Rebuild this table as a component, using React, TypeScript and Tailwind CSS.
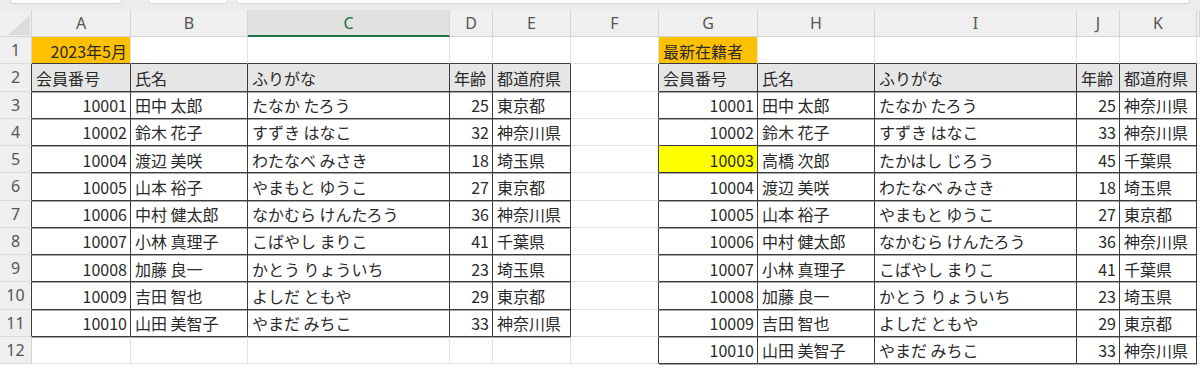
import React from 'react';

type Cell = { text?: string; align?: 'left' | 'right'; bg?: string };

const LETTERS = ['A', 'B', 'C', 'D', 'E', 'F', 'G', 'H', 'I', 'J', 'K', ''];

const oldList: [string, string, string, string, string][] = [
  ['10001', '田中 太郎', 'たなか たろう', '25', '東京都'],
  ['10002', '鈴木 花子', 'すずき はなこ', '32', '神奈川県'],
  ['10004', '渡辺 美咲', 'わたなべ みさき', '18', '埼玉県'],
  ['10005', '山本 裕子', 'やまもと ゆうこ', '27', '東京都'],
  ['10006', '中村 健太郎', 'なかむら けんたろう', '36', '神奈川県'],
  ['10007', '小林 真理子', 'こばやし まりこ', '41', '千葉県'],
  ['10008', '加藤 良一', 'かとう りょういち', '23', '埼玉県'],
  ['10009', '吉田 智也', 'よしだ ともや', '29', '東京都'],
  ['10010', '山田 美智子', 'やまだ みちこ', '33', '神奈川県'],
];

const newList: [string, string, string, string, string][] = [
  ['10001', '田中 太郎', 'たなか たろう', '25', '神奈川県'],
  ['10002', '鈴木 花子', 'すずき はなこ', '33', '神奈川県'],
  ['10003', '高橋 次郎', 'たかはし じろう', '45', '千葉県'],
  ['10004', '渡辺 美咲', 'わたなべ みさき', '18', '埼玉県'],
  ['10005', '山本 裕子', 'やまもと ゆうこ', '27', '東京都'],
  ['10006', '中村 健太郎', 'なかむら けんたろう', '36', '神奈川県'],
  ['10007', '小林 真理子', 'こばやし まりこ', '41', '千葉県'],
  ['10008', '加藤 良一', 'かとう りょういち', '23', '埼玉県'],
  ['10009', '吉田 智也', 'よしだ ともや', '29', '東京都'],
  ['10010', '山田 美智子', 'やまだ みちこ', '33', '神奈川県'],
];

const headers = ['会員番号', '氏名', 'ふりがな', '年齢', '都道府県'];

// sheet[row][col], rows 1..12, cols 1..12
function buildSheet(): Cell[][] {
  const sheet: Cell[][] = [];
  for (let r = 0; r <= 12; r++) {
    sheet.push([]);
    for (let c = 0; c <= 12; c++) sheet[r].push({});
  }
  sheet[1][1] = { text: '2023年5月', align: 'right', bg: 'orange' };
  sheet[1][7] = { text: '最新在籍者', align: 'left', bg: 'orange' };
  headers.forEach((h, i) => {
    sheet[2][1 + i] = { text: h, bg: 'head' };
    sheet[2][7 + i] = { text: h, bg: 'head' };
  });
  oldList.forEach((row, i) => {
    row.forEach((v, j) => {
      sheet[3 + i][1 + j] = { text: v, align: j === 0 || j === 3 ? 'right' : 'left' };
    });
  });
  newList.forEach((row, i) => {
    row.forEach((v, j) => {
      sheet[3 + i][7 + j] = {
        text: v,
        align: j === 0 || j === 3 ? 'right' : 'left',
        bg: row[0] === '10003' && j === 0 ? 'yellow' : undefined,
      };
    });
  });
  return sheet;
}

function inTable(r: number, c: number) {
  if (r >= 2 && r <= 11 && c >= 1 && c <= 5) return true;
  if (r >= 2 && r <= 12 && c >= 7 && c <= 11) return true;
  return false;
}

const GRID =
  'grid grid-cols-[32px_99px_117px_202px_43px_78px_88px_99px_117px_202px_43px_77px_1fr]';

function clsx(...a: (string | false | undefined)[]) {
  return a.filter(Boolean).join(' ');
}

function TopBar() {
  return (
    <div className="flex h-[10px] items-start bg-[#ececec] px-[10px]">
      <div className="h-[4px] w-[112px] rounded-b-[4px] border border-t-0 border-[#d6d6d6] bg-white" />
      <div className="ml-[26px] h-[4px] w-[80px] rounded-b-[4px] border border-t-0 border-[#d6d6d6] bg-white" />
      <div className="ml-[8px] h-[4px] flex-1 rounded-b-[4px] border border-t-0 border-[#d6d6d6] bg-white" />
    </div>
  );
}

function ColumnHeader() {
  return (
    <div className={`${GRID} h-[27px] font-['Noto_Sans',sans-serif]`}>
      <div className="relative border-b border-r border-[#d4d4d4] bg-[#efefef]">
        <svg className="absolute left-[8px] top-[5px]" width="22" height="20" viewBox="0 0 22 20">
          <polygon points="22,0 22,20 0,20" fill="#dcdcdc" />
        </svg>
      </div>
      {LETTERS.map((l, i) =>
        l === 'C' ? (
          <div
            key={i}
            className="flex items-center justify-center border-b-2 border-r border-b-[#217346] border-r-[#d4d4d4] bg-[#e1e1e1] text-[16px] text-[#217346]"
          >
            {l}
          </div>
        ) : (
          <div
            key={i}
            className="flex items-center justify-center border-b border-r border-[#d4d4d4] bg-[#efefef] text-[16px] text-[#555]"
          >
            {l}
          </div>
        )
      )}
    </div>
  );
}

function SheetCell({ cell, r, c }: { cell: Cell; r: number; c: number }) {
  const darkRight = inTable(r, c) || inTable(r, c + 1);
  const darkBottom = inTable(r, c) || inTable(r + 1, c);
  const bg =
    cell.bg === 'orange'
      ? 'bg-[#ffc000]'
      : cell.bg === 'yellow'
      ? 'bg-[#ffff00]'
      : cell.bg === 'head'
      ? 'bg-[#e7e6e6]'
      : '';
  return (
    <div
      className={clsx(
        'flex items-center overflow-hidden whitespace-nowrap border-b border-r pt-[1px] text-[16px] text-[#2a2a2a]',
        darkRight ? 'border-r-[#3c3c3c]' : 'border-r-[#e1e1e1]',
        darkBottom ? 'border-b-[#3c3c3c] shadow-[0_1px_0_#a8a8a8]' : 'border-b-[#e1e1e1]',
        cell.align === 'right' ? 'justify-end pr-[3px]' : 'justify-start pl-[4px]',
        bg
      )}
    >
      {cell.text}
    </div>
  );
}

export default function App() {
  const sheet = buildSheet();
  const rows = Array.from({ length: 12 }, (_, i) => i + 1);
  const cols = Array.from({ length: 12 }, (_, i) => i + 1);
  return (
    <div className="h-[368px] w-[1200px] overflow-hidden bg-white font-['Noto_Sans_CJK_JP','Noto_Sans',sans-serif]">
      <TopBar />
      <ColumnHeader />
      {rows.map((r) => (
        <div key={r} className={`${GRID} h-[27.25px]`}>
          <div
            className={clsx(
              "flex items-center justify-center border-b border-r border-b-[#dadada] bg-[#efefef] font-['Noto_Sans',sans-serif] text-[16px] text-[#555]",
              inTable(r, 1) ? 'border-r-[#3c3c3c]' : 'border-r-[#d4d4d4]'
            )}
          >
            {r}
          </div>
          {cols.map((c) => (
            <SheetCell key={c} cell={sheet[r][c]} r={r} c={c} />
          ))}
        </div>
      ))}
    </div>
  );
}
